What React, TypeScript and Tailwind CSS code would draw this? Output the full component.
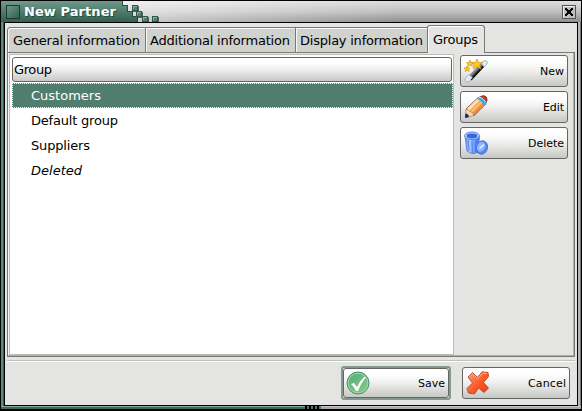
import React from "react";

const button =
  "flex items-center justify-between rounded-[3px] border border-[#656762] bg-gradient-to-b from-white from-20% via-[#efefee] via-50% to-[#c6c8c4] text-[11px] text-black";

function Label({ text, width }: { text: string; width: number }) {
  return (
    <svg width={width} height="16" className="block shrink-0 overflow-visible">
      <text x="0" y="12" textLength={width} fill="currentColor">{text}</text>
    </svg>
  );
}

function Wand() {
  return (
    <svg width="24" height="24" viewBox="0 0 24 24">
      <defs>
        <linearGradient id="wand" x1="0.3" y1="0.3" x2="0.7" y2="0.7">
          <stop stopColor="#d2d2d2" />
          <stop offset="0.5" stopColor="#6a6a6a" />
          <stop offset="0.6" stopColor="#151515" />
          <stop offset="1" stopColor="#000" />
        </linearGradient>
      </defs>
      <path d="M3.5 18 17 3.5l4 3.5L7.500 21.500z" fill="url(#wand)" />
      <path d="m1 20 3.500-4.500 4 3L5 22.500q-4 1-4-2.500z" fill="#dfedf5" stroke="#8aa0b0" strokeWidth=".7" />
      <path d="m17 4 3-2.500q4.500 0 3 3.500l-3 3z" fill="#dfebf1" stroke="#8aa0b0" strokeWidth=".7" />
      <g fill="#ffc81e" stroke="#c98a14" strokeWidth=".6">
        <path d="m13 0 1.500 3.500h4l-3 2.500 1.500 4-4-2.500-4 2.500 1.300-4-3-2.500h4z" />
        <path d="m6 1 1 2.500h2.500L8 5l.5 2.500L6 6 3.500 7.500 4.200 5 2.500 3.500H5z" />
        <path d="m3 7 .8 2H6l-1.500 1.500.6 2L3 11.200 1 12.500l.6-2L0 9h2.200z" />
      </g>
    </svg>
  );
}

function Pencil() {
  return (
    <svg width="24" height="24" viewBox="0 0 24 24">
      <path d="M2 14 14 2.500q6 1 8 6.500L10 21z" fill="#ffb56a" stroke="#8d5b3c" strokeWidth=".8" />
      <path d="M3 14 14.500 3l2.500 1.500L5.500 16z" fill="#ffe2b8" />
      <path d="M8 18.500 19.500 7l2 2.500L10 20.500z" fill="#e88a45" />
      <path d="M5.500 16 17 4.500" stroke="#d98a50" strokeWidth=".7" />
      <path d="M15.500 2q4.500-3 7 0 1.500 3-.5 6-1.500-4-6.500-6z" fill="#c4391d" stroke="#7b381d" strokeWidth=".7" />
      <path d="m13 4 2.500-2.300q5 1.300 7 6.300L20 10.500Q18 5.500 13 4z" fill="#39a9df" />
      <path d="m14.500 3 1.500-.8q4 1.500 5.500 5" fill="none" stroke="#b9e9fb" />
      <path d="M2 14.200q3 0 4 2.300 3 .5 4 3.500Q6 22.500 1.200 22.500z" fill="#f7d5ab" stroke="#8d5b3c" strokeWidth=".5" />
      <path d="M1.500 18.500q2.500 0 3.500 3.300Q3 23.200 1 22.600z" fill="#1a2468" />
    </svg>
  );
}

function Bin() {
  return (
    <svg width="24" height="24" viewBox="0 0 24 24">
      <defs>
        <linearGradient id="bin">
          <stop stopColor="#5b8bf0" /><stop offset=".3" stopColor="#acd0ff" /><stop offset=".65" stopColor="#6c9cfb" /><stop offset="1" stopColor="#3f6edc" />
        </linearGradient>
      </defs>
      <path d="m1 5 2 15q5 4.500 11 1l1.500-16z" fill="url(#bin)" stroke="#4874dd" strokeWidth=".8" />
      <path d="m4 9 1.200 11M8 10l.3 12M12 9.500l-.6 11.500" stroke="#4473df" strokeWidth=".8" />
      <ellipse cx="8" cy="4.800" rx="7.500" ry="3.900" fill="#a5c6ff" stroke="#4f7ce4" strokeWidth=".8" />
      <ellipse cx="8" cy="5" rx="5.200" ry="2.400" fill="#3a67d6" />
      <ellipse cx="18" cy="16.500" rx="5.500" ry="6.800" transform="rotate(15 18 16.500)" fill="#5587f5" stroke="#4069cf" strokeWidth=".8" />
      <ellipse cx="17" cy="15.800" rx="4" ry="5.200" transform="rotate(25 17 15.800)" fill="#8cb5ff" />
      <path d="m15.500 17.500 4.500-4" stroke="#e8f3ff" strokeWidth="1.600" />
    </svg>
  );
}

function Check() {
  return (
    <svg width="24" height="24" viewBox="0 0 24 24">
      <defs>
        <linearGradient id="check" x1="0" y1="0" x2="1" y2="1">
          <stop stopColor="#4aae76" /><stop offset=".55" stopColor="#72be83" /><stop offset="1" stopColor="#91cb83" />
        </linearGradient>
      </defs>
      <circle cx="12" cy="12" r="11" fill="url(#check)" stroke="#47906b" />
      <circle cx="12" cy="12" r="9.8" fill="none" stroke="#a4d8b3" />
      <path d="m5 13 3-1 3 4q3-6 7-10h2q-5 6-8 14h-2q-2-4-5-7z" fill="white" />
    </svg>
  );
}

function Cross() {
  return (
    <svg width="24" height="24" viewBox="0 0 24 24">
      <defs>
        <linearGradient id="cross" x1="0" y1="0" x2="1" y2="1">
          <stop stopColor="#ffa076" /><stop offset=".55" stopColor="#ff5725" /><stop offset="1" stopColor="#eb3b11" />
        </linearGradient>
      </defs>
      <path d="m2 6 4.500-4.500 5 5L16 .8l6 .7.5 4-5 6 5 5.500-4.500 4.500-5.500-4.500-4 6-6-1L1 17.500l5.500-5.500z" fill="url(#cross)" stroke="#a84a34" strokeWidth=".9" strokeLinejoin="round" />
      <path d="m3.500 6 3-3 5.200 5L16.500 2l4.500.5" fill="none" stroke="#ffad8c" strokeWidth="1" />
    </svg>
  );
}

function TitlePixels() {
  const tiles = [[11, 4], [15, 10], [21, 15], [31, 15]];
  return (
    <svg width="42" height="21" className="shrink-0" shapeRendering="crispEdges">
      <defs>
        <linearGradient id="title" x2="0" y2="21" gradientUnits="userSpaceOnUse">
          <stop stopColor="#719a8b" /><stop offset=".5" stopColor="#4e7d6d" /><stop offset="1" stopColor="#355f50" />
        </linearGradient>
      </defs>
      <path d="M0 0h1v4h5v6h5v5h5v6H0z" fill="url(#title)" />
      <path d="M1 0v4.500h5v5.500h5v5h5v6" fill="none" stroke="#2a4a3f" />
      {tiles.map(([x, y]) => (
        <g key={`${x}-${y}`}>
          <rect x={x + 1} y={y + 1} width="6" height="6" fill="#1f3830" opacity=".7" />
          <rect x={x} y={y} width="6" height="6" fill="#2f5a4b" />
          <rect x={x + 1} y={y + 1} width="4" height="4" fill="#548272" />
          <path d={`M${x + 1.5} ${y + 4}v-2.500h3`} stroke="#86ad9f" fill="none" />
        </g>
      ))}
    </svg>
  );
}

export default function App() {
  return (
    <div className="flex h-[411px] w-[582px] flex-col overflow-hidden bg-black px-px pt-px font-['DejaVu_Sans',sans-serif] text-[13px] leading-4 text-black">
      <header className="flex h-[21px] shrink-0 bg-[linear-gradient(to_right,rgba(255,255,255,0.55)_120px,rgba(255,255,255,0)_400px),linear-gradient(to_bottom,#dedede,#c0c0c0_50%,#8e8e8e)]">
        <div className="flex w-[120px] shrink-0 items-center bg-gradient-to-b from-[#719a8b] via-[#4e7d6d] to-[#355f50] pl-[5px]">
          <span className="size-[14px] shrink-0 border border-[#20372e] bg-gradient-to-br from-[#6b9989] to-[#33604f]" />
          <span className="ml-[4px] text-white [text-shadow:1px_1px_0_#274c3f] font-bold"><Label text="New Partner" width={92} /></span>
        </div>
        <TitlePixels />
        <div className="flex flex-1 items-center justify-end pr-[5px]">
          <span className="flex size-[14px] items-center justify-center border border-[#555] bg-[#bebebe] shadow-[inset_1px_1px_0_#eee]">
            <svg width="10" height="10" viewBox="0 0 10 10" shapeRendering="crispEdges"><path d="M1 1h2v1h1v1h2V2h1V1h2v2H8v1H7v2h1v1h1v2H7V8H6V7H4v1H3v1H1V7h1V6h1V4H2V3H1z" fill="#080808" /></svg>
          </span>
        </div>
      </header>
      <div className="flex h-[384px] shrink-0">
        <div className="w-[3px] border-r border-[#345c4e] bg-[#5d8b7b]" />
        <main className="w-[574px] border border-black bg-[#e4e4e2] pl-[2px] pt-[2px]">
          <nav className="flex h-[28px] items-end">
            <div className="flex h-[26px] w-[139px] items-center rounded-tl-[3px] border border-[#777973] bg-[#d0d2ce] pl-[5px] pt-px shadow-[inset_1px_1px_0_#f8f8f6]"><Label text="General information" width={127} /></div>
            <div className="flex h-[26px] w-[150px] items-center border-y border-r border-[#777973] bg-[#d0d2ce] pl-[4px] pt-px shadow-[inset_1px_1px_0_#f8f8f6]"><Label text="Additional information" width={140} /></div>
            <div className="flex h-[26px] w-[131px] items-center border-y border-[#777973] bg-[#d0d2ce] pl-[4px] pt-px shadow-[inset_1px_1px_0_#f8f8f6]"><Label text="Display information" width={123} /></div>
            <div className="flex h-[28px] w-[58px] items-center rounded-t-[3px] border border-b-0 border-[#777973] bg-[#e4e4e2] pl-[5px] pt-px shadow-[inset_1px_1px_0_#fff]"><Label text="Groups" width={45} /></div>
            <div className="mr-[2px] h-px flex-1 bg-[#777973]" />
          </nav>
          <section className="flex h-[304px] w-[568px] border border-t-0 border-[#777973] pl-px pt-px shadow-[inset_-1px_-1px_0_#b0b1ae,inset_1px_0_0_#f7f7f5]">
            <div className="h-[301px] w-[445px] border border-[#bcbdba] bg-white pl-[2px] pt-[2px]">
              <div className="flex h-[25px] w-[440px] items-center rounded-[3px] border border-[#656762] bg-gradient-to-b from-white from-20% via-[#eee] to-[#c9cac7] pl-px"><Label text="Group" width={38} /></div>
              <div className="mt-px flex h-[25px] w-[441px] items-center border border-dotted border-white bg-[#507d6d] pl-[18px] text-white"><Label text="Customers" width={70} /></div>
              <div className="flex h-[25px] items-center pl-[19px]"><Label text="Default group" width={87} /></div>
              <div className="flex h-[25px] items-center pl-[19px]"><Label text="Suppliers" width={59} /></div>
              <div className="flex h-[25px] items-center pl-[19px] italic"><Label text="Deleted" width={51} /></div>
            </div>
            <div className="ml-[6px] flex flex-col gap-[4px] pt-px">
              <button className={`${button} h-[32px] w-[108px] pl-[3px] pr-[3px]`}><Wand /><Label text="New" width={24} /></button>
              <button className={`${button} h-[32px] w-[108px] pl-[3px] pr-[3px]`}><Pencil /><Label text="Edit" width={21} /></button>
              <button className={`${button} h-[32px] w-[108px] pl-[3px] pr-[3px]`}><Bin /><Label text="Delete" width={36} /></button>
            </div>
          </section>
          <div className="mt-[3px] h-[2px] w-[568px] border-b border-white bg-[#c1c2bf]" />
          <footer className="flex w-[563px] items-center justify-end gap-[11px] pt-[4px]">
            <div className="rounded-[3px] border-2 border-[#84998d]"><button className={`${button} h-[30px] w-[106px] pl-[2px] pr-[3px]`}><Check /><Label text="Save" width={27} /></button></div>
            <button className={`${button} h-[32px] w-[108px] pl-[3px] pr-[3px]`}><Cross /><Label text="Cancel" width={38} /></button>
          </footer>
        </main>
        <div className="w-[3px] border-r border-[#777] bg-[#b8b8b8]" />
      </div>
      <div className="flex h-[3px] shrink-0 bg-[#a7a7a7]">
        <div className="w-[304px] border-t border-[#82a99b] bg-[#426d5e]" />
        {[0, 1, 2, 3].map((n) => <div key={n} className="w-[4px] border-l-2 border-black bg-[#527b6d]" />)}
        <div className="flex-1 border-t border-[#c8c8c8]" />
      </div>
    </div>
  );
}
